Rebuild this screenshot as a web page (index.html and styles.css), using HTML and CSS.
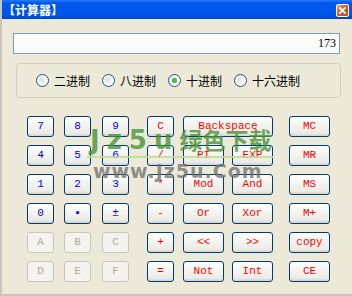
FILE: index.html
```html
<!DOCTYPE html>
<html lang="zh-CN">
<head>
    <meta charset="UTF-8">
    <title>计算器</title>
    <link rel="stylesheet" href="styles.css">
</head>
<body>

    <div class="window">
        <div class="title-bar">
            <span class="title">【计算器】</span>
            <span class="close-btn">
                <svg width="13" height="13" viewBox="0 0 13 13">
                    <path d="M3.5 3.5 L9.5 9.5 M9.5 3.5 L3.5 9.5" stroke="#fff" stroke-width="2.2" stroke-linecap="square"/>
                </svg>
            </span>
        </div>

        <div class="content">
            <div class="display">173</div>

            <div class="radio-group">
                <label class="radio"><span class="dot"></span>二进制</label>
                <label class="radio"><span class="dot"></span>八进制</label>
                <label class="radio"><span class="dot checked"></span>十进制</label>
                <label class="radio"><span class="dot"></span>十六进制</label>
            </div>

            <div class="keys">
                <button class="key num">7</button>
                <button class="key num">8</button>
                <button class="key num">9</button>
                <button class="key op">C</button>
                <button class="key op wide span2">Backspace</button>
                <button class="key op wide">MC</button>

                <button class="key num">4</button>
                <button class="key num">5</button>
                <button class="key num">6</button>
                <button class="key op">/</button>
                <button class="key op wide">PI</button>
                <button class="key op wide">EXP</button>
                <button class="key op wide">MR</button>

                <button class="key num">1</button>
                <button class="key num">2</button>
                <button class="key num">3</button>
                <button class="key op">*</button>
                <button class="key op wide">Mod</button>
                <button class="key op wide">And</button>
                <button class="key op wide">MS</button>

                <button class="key num">0</button>
                <button class="key num">&#9642;</button>
                <button class="key num">±</button>
                <button class="key op">-</button>
                <button class="key op wide">Or</button>
                <button class="key op wide">Xor</button>
                <button class="key op wide">M+</button>

                <button class="key off">A</button>
                <button class="key off">B</button>
                <button class="key off">C</button>
                <button class="key op">+</button>
                <button class="key op wide">&lt;&lt;</button>
                <button class="key op wide">&gt;&gt;</button>
                <button class="key op wide">copy</button>

                <button class="key off">D</button>
                <button class="key off">E</button>
                <button class="key off">F</button>
                <button class="key op">=</button>
                <button class="key op wide">Not</button>
                <button class="key op wide">Int</button>
                <button class="key op wide">CE</button>
            </div>

            <!-- site watermark sitting over the keypad -->
            <div class="watermark">
                <div class="wm-top"><span class="wm-latin">Jz5u</span>绿色下载</div>
                <div class="wm-line"></div>
                <div class="wm-bottom">www.Jz5u.Com</div>
            </div>
        </div>
    </div>

</body>
</html>
```

FILE: styles.css
```css
/* Reset default margins and paddings */
* {
    margin: 0;
    padding: 0;
    box-sizing: border-box;
}

body {
    width: 352px;
    height: 296px;
    overflow: hidden;
    font-family: "Noto Sans CJK SC", "DejaVu Sans", sans-serif;
}

.window {
    width: 352px;
    height: 296px;
    background-color: #ECE9D8;
    border-left: 2px solid #C8C6BC;
    border-bottom: 2px solid #C8C6BC;
    display: flex;
    flex-direction: column;
}

.title-bar {
    height: 19px;
    background: linear-gradient(to bottom, #2C7BF5 0%, #0058EE 15%, #0055E8 80%, #0046CC 100%);
    display: flex;
    align-items: center;
    justify-content: space-between;
    padding: 0 3px 0 1px;
}

.title {
    color: #FFFFFF;
    font-size: 12px;
    font-weight: bold;
    line-height: 19px;
}

.close-btn {
    width: 13px;
    height: 13px;
    border: 1px solid #FFFFFF;
    border-radius: 2px;
    background: linear-gradient(135deg, #F09C7E 0%, #E0572A 45%, #C3411C 100%);
    display: flex;
    align-items: center;
    justify-content: center;
    margin-top: 1px;
}

.close-btn svg {
    display: block;
    width: 11px;
    height: 11px;
}

.content {
    position: relative;
    flex: 1;
    padding: 14px 0 0 11px;
}

.display {
    width: 327px;
    height: 21px;
    border: 1px solid #7F9DB9;
    background-color: #FBFBF9;
    text-align: right;
    padding-right: 3px;
    font-family: "Liberation Serif", serif;
    font-size: 12px;
    line-height: 19px;
    color: #000000;
}

.radio-group {
    width: 325px;
    height: 35px;
    margin: 9px 0 0 3px;
    border: 1px solid #D0D0BF;
    border-radius: 4px;
    display: flex;
    align-items: center;
    padding-left: 19px;
    gap: 6px;
}

.radio {
    display: flex;
    align-items: center;
    gap: 5px;
    font-size: 12px;
    color: #000000;
    margin-right: 6px;
}

.dot {
    width: 13px;
    height: 13px;
    border-radius: 50%;
    border: 1px solid #1C5180;
    background: radial-gradient(circle at 40% 40%, #DCDCD6 0%, #FFFFFF 60%);
    display: flex;
    align-items: center;
    justify-content: center;
}

.dot.checked::after {
    content: "";
    width: 5px;
    height: 5px;
    border-radius: 50%;
    background: radial-gradient(circle, #55D04A 0%, #21A121 100%);
}

.keys {
    display: grid;
    grid-template-columns: 37px 38px 45px 36px 49px 57px 41px;
    grid-auto-rows: 21px;
    row-gap: 8px;
    margin: 18px 0 0 14px;
}

.key {
    width: 27px;
    height: 21px;
    border: 1px solid #003C74;
    border-radius: 3px;
    background: linear-gradient(to bottom, #FFFFFF 0%, #F4F4F0 40%, #ECEBE6 85%, #D6D0C5 100%);
    font-family: "Liberation Mono", monospace;
    font-size: 11px;
    line-height: 19px;
    text-align: center;
    cursor: pointer;
}

.key.wide {
    width: 41px;
}

.key.span2 {
    grid-column: span 2;
    width: 90px;
}

.num {
    color: #0000FF;
}

.op {
    color: #FF0000;
}

.off {
    color: #ACA899;
    border-color: #C9C7BA;
    background: #F4F3EE;
}

.watermark {
    position: absolute;
    left: 88px;
    top: 105px;
    width: 185px;
    pointer-events: none;
}

.wm-top {
    font-size: 23px;
    font-weight: bold;
    line-height: 30px;
    color: rgba(70, 145, 55, 0.8);
    white-space: nowrap;
}

.wm-latin {
    font-family: "DejaVu Sans", sans-serif;
    font-size: 26px;
    letter-spacing: 7px;
}

.wm-line {
    height: 2px;
    width: 186px;
    margin: 1px 0 0 -3px;
    background: rgba(190, 220, 150, 0.85);
}

.wm-bottom {
    font-family: "DejaVu Sans", sans-serif;
    font-size: 19px;
    font-weight: bold;
    line-height: 20px;
    margin: 3px 0 0 3px;
    color: rgba(110, 110, 110, 0.75);
    letter-spacing: 1px;
    white-space: nowrap;
}
```
